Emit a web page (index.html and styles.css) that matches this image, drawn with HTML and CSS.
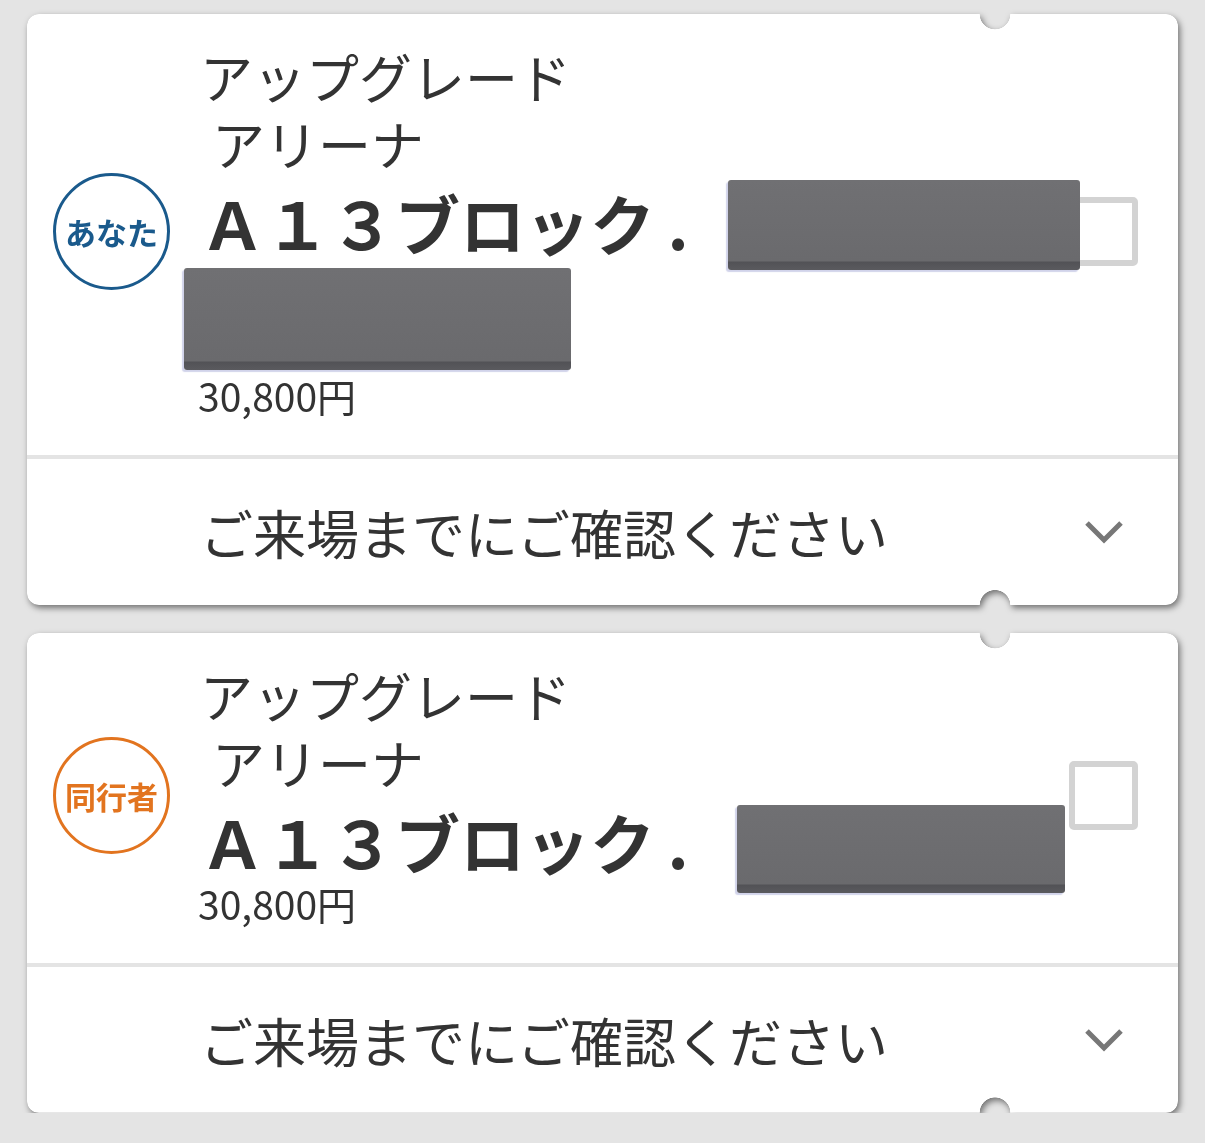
FILE: index.html
```html
<!DOCTYPE html>
<html lang="ja">
<head>
<meta charset="utf-8">
<title>チケット</title>
<link rel="stylesheet" href="styles.css">
</head>
<body>
<div class="page">
  <div class="ticket">
    <div class="card">
      <div class="main">
        <div class="badge badge-you">あなた</div>
        <div class="info">
          <div class="type">アップグレード</div>
          <div class="area">アリーナ</div>
          <div class="seat">Ａ１３ブロック<span class="dot">.</span><span class="redact redact-1"></span></div>
          <div class="redact redact-2"></div>
          <div class="price">30,800円</div>
        </div>
        <div class="check"></div>
      </div>
      <div class="divider"></div>
      <div class="notice">
        <span class="notice-text">ご来場までにご確認ください</span>
        <svg class="chev" width="40" height="26" viewBox="0 0 40 26"><polyline points="3,4 20,21 37,4" fill="none" stroke="#777" stroke-width="5"/></svg>
      </div>
    </div>
  </div>
  <div class="ticket">
    <div class="card">
      <div class="main">
        <div class="badge badge-companion">同行者</div>
        <div class="info">
          <div class="type">アップグレード</div>
          <div class="area">アリーナ</div>
          <div class="seat">Ａ１３ブロック<span class="dot">.</span><span class="redact redact-3"></span></div>
          <div class="price">30,800円</div>
        </div>
        <div class="check"></div>
      </div>
      <div class="divider"></div>
      <div class="notice">
        <span class="notice-text">ご来場までにご確認ください</span>
        <svg class="chev" width="40" height="26" viewBox="0 0 40 26"><polyline points="3,4 20,21 37,4" fill="none" stroke="#777" stroke-width="5"/></svg>
      </div>
    </div>
  </div>
</div>
</body>
</html>
```
FILE: styles.css
```css
html, body {
  margin: 0;
  padding: 0;
  background: #e4e4e4;
}
body {
  font-family: "Noto Sans CJK JP", "Noto Sans", sans-serif;
  color: #333;
}
.page {
  display: flex;
  flex-direction: column;
  gap: 28px;
  padding: 14px 27px 0;
  width: 1151px;
}
.ticket {
  filter: drop-shadow(2px 3px 3px rgba(0, 0, 0, 0.5));
}
.card {
  background: #fff;
  border-radius: 12px;
  -webkit-mask-image: radial-gradient(circle at 968px 0, transparent 15px, #000 15.6px), radial-gradient(circle at 968px 100%, transparent 15px, #000 15.6px);
  -webkit-mask-size: 100% 51%, 100% 51%;
  -webkit-mask-position: top, bottom;
  -webkit-mask-repeat: no-repeat;
  mask-image: radial-gradient(circle at 968px 0, transparent 15px, #000 15.6px), radial-gradient(circle at 968px 100%, transparent 15px, #000 15.6px);
  mask-size: 100% 51%, 100% 51%;
  mask-position: top, bottom;
  mask-repeat: no-repeat;
}
.main {
  display: flex;
  align-items: center;
  gap: 30px;
  padding: 29px 40px 35px 26px;
}
.badge {
  flex: none;
  width: 117px;
  height: 117px;
  box-sizing: border-box;
  border: 3px solid currentColor;
  border-radius: 50%;
  display: flex;
  align-items: center;
  justify-content: center;
  font-size: 31px;
  font-weight: 700;
  line-height: 1;
}
.badge-you {
  color: #1a5a8c;
}
.badge-companion {
  color: #e2741f;
}
.info {
  flex: 1 1 0;
  min-width: 0;
}
.type, .area {
  font-size: 53px;
  line-height: 67px;
}
.area {
  padding-left: 12px;
}
.seat {
  margin-top: 9px;
  font-size: 65px;
  line-height: 73px;
  font-weight: 700;
  white-space: nowrap;
}
.dot {
  display: inline-block;
  width: 46px;
  text-align: center;
}
.redact {
  position: relative;
  z-index: 1;
  border-radius: 3px;
  background: linear-gradient(#707073, #6a6a6d calc(100% - 9px), #525256 calc(100% - 8px), #5a5a5e);
  box-shadow: -2px 2px 1px rgba(70, 80, 170, 0.25);
}
.redact-1 {
  display: inline-block;
  vertical-align: top;
  width: 352px;
  height: 90px;
  margin: -6px 0 -11px 27px;
}
.redact-2 {
  width: 387px;
  height: 102px;
  margin: 9px 0 0 -16px;
}
.redact-3 {
  display: inline-block;
  vertical-align: top;
  width: 328px;
  height: 88px;
  margin: 0 0 -15px 36px;
}
.price {
  font-size: 39px;
  line-height: 50px;
  margin-left: -2px;
}
.check {
  flex: none;
  width: 69px;
  height: 69px;
  box-sizing: border-box;
  border: 6px solid #d3d3d3;
  border-radius: 5px;
}
.divider {
  height: 4px;
  background: #e4e4e4;
}
.notice {
  height: 146px;
  display: flex;
  align-items: center;
  justify-content: space-between;
  padding: 0 54px 0 173px;
}
.notice-text {
  font-size: 53px;
  line-height: 75px;
}
.chev {
  display: block;
  flex: none;
}
```
